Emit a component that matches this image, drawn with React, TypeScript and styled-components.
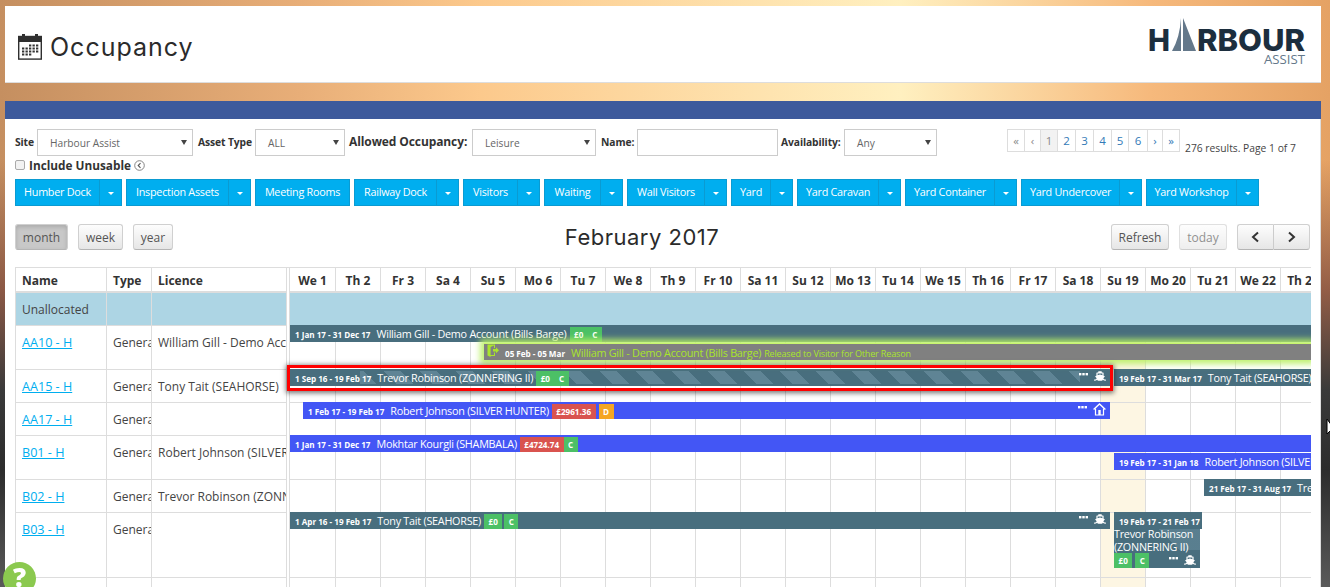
import React from "react";
import styled, { createGlobalStyle, css } from "styled-components";
import { FaShip } from "react-icons/fa";

const GlobalStyle = createGlobalStyle`
	html, body {
		margin: 0;
		padding: 0;
		height: 587px;
		overflow: hidden;
	}
	body {
		font-family: "Open Sans", "Noto Sans", sans-serif;
		color: #333;
		background:
			linear-gradient(to bottom, rgba(90, 50, 40, 0) 160px, rgba(120, 70, 60, 0.75) 290px, #3a3a3a 390px, #2c2c2c 470px, #5a5a5a 587px),
			linear-gradient(to right, #c58f60 0, #e8ae78 300px, #fcc98c 480px, #fff0c0 900px, #f6b97c 1150px, #e5a264 1330px);
	}
`;

const Page = styled.div`
	width: 1316px;
	padding: 6px 0 0 5px;
`;

const Header = styled.header`
	height: 77px;
	background: #fff;
	border-bottom: 1px solid #ddd;
	box-sizing: border-box;
	display: flex;
	align-items: center;
	justify-content: space-between;
	padding: 0 15px 0 13px;
`;

const TitleGroup = styled.div`
	display: flex;
	align-items: center;
	gap: 8px;
	margin-top: 6px;
`;

const PageTitle = styled.h1`
	margin: 0;
	font-family: Inter, "Open Sans", sans-serif;
	font-weight: 400;
	font-size: 25px;
	letter-spacing: 1px;
	color: #2b2b2b;
`;

const BlueBand = styled.div`
	height: 18px;
	margin-top: 18px;
	background: #3d5a9c;
`;

const Panel = styled.main`
	background: #fff;
	padding: 10px 10px 0;
	height: 468px;
	box-sizing: border-box;
	overflow: hidden;
	border-right: 1px solid #ddd;
`;

const FilterRow = styled.div`
	display: flex;
	align-items: flex-start;
	height: 27px;
`;

const FilterLabel = styled.label<{ $big?: boolean; $gap: number; $w: number }>`
	flex: 0 0 ${(p) => p.$w}px;
	font-weight: 700;
	font-size: ${(p) => (p.$big ? "12px" : "10.3px")};
	letter-spacing: -0.1px;
	line-height: 26px;
	margin-left: ${(p) => p.$gap}px;
	white-space: nowrap;
	color: #333;
`;

const SelectBox = styled.div<{ $w: number }>`
	position: relative;
	flex: 0 0 ${(p) => p.$w}px;
	height: 27px;
	box-sizing: border-box;
	border: 1px solid #ccc;
	background: #fff;
	font-size: 10.2px;
	line-height: 26px;
	padding-left: 12px;
	color: #666;
	&::after {
		content: "";
		position: absolute;
		right: 5px;
		top: 10px;
		border-left: 3px solid transparent;
		border-right: 3px solid transparent;
		border-top: 5px solid #444;
	}
`;

const NameInput = styled.input`
	flex: 0 0 141px;
	width: 141px;
	min-width: 0;
	height: 27px;
	box-sizing: border-box;
	border: 1px solid #ccc;
	padding: 0 8px;
	outline: none;
`;

const Pager = styled.ul`
	display: flex;
	list-style: none;
	margin: 0 0 0 70px;
	padding: 0;
	height: 23px;
	border: 1px solid #ddd;
	box-sizing: border-box;
`;

const PageItem = styled.li<{ $w: number; $active?: boolean; $muted?: boolean }>`
	width: ${(p) => p.$w}px;
	text-align: center;
	font-size: 11.5px;
	line-height: 21px;
	border-right: 1px solid #ddd;
	box-sizing: border-box;
	color: ${(p) => (p.$active || p.$muted ? "#8a8a8a" : "#337ab7")};
	background: ${(p) => (p.$active ? "#f2f2f2" : "#fff")};
	&:last-child {
		border-right: 0;
	}
`;

const Results = styled.span`
	font-size: 10.3px;
	margin: 12px 0 0 5px;
	white-space: nowrap;
	color: #444;
`;

const UnusableRow = styled.div`
	display: flex;
	align-items: center;
	height: 14px;
	margin-top: 2px;
`;

const Check = styled.span`
	width: 10px;
	height: 10px;
	box-sizing: border-box;
	border: 1px solid #aaa;
	border-radius: 2px;
	background: #f2f2f2;
	margin-right: 4px;
`;

const UnusableLabel = styled.span`
	font-weight: 700;
	font-size: 11.8px;
	margin-right: 3px;
`;

const GroupRow = styled.div`
	display: flex;
	gap: 4px;
	margin-top: 7px;
`;

const SplitButton = styled.div<{ $w: number }>`
	display: flex;
	width: ${(p) => p.$w}px;
	height: 27px;
	background: #00aeef;
	border: 1px solid #0a9bd2;
	box-sizing: border-box;
	color: #fff;
	font-size: 10.8px;
	letter-spacing: -0.25px;
	line-height: 24px;
	white-space: nowrap;
`;

const SplitMain = styled.span`
	flex: 1;
	text-align: center;
`;

const SplitCaret = styled.span`
	flex: 0 0 21px;
	border-left: 1px solid #0a9bd2;
	display: flex;
	align-items: center;
	justify-content: center;
	&::after {
		content: "";
		border-left: 3px solid transparent;
		border-right: 3px solid transparent;
		border-top: 3px solid #fff;
		margin-top: 2px;
	}
`;

const Toolbar = styled.div`
	display: flex;
	justify-content: space-between;
	align-items: center;
	margin-top: 18px;
	height: 26px;
`;

const ToolGroup = styled.div`
	display: flex;
	gap: 10px;
`;

const Segmented = styled.div`
	display: flex;
`;

const CalendarButton = styled.button<{ $w: number; $active?: boolean; $disabled?: boolean; $seg?: "left" | "right" }>`
	width: ${(p) => p.$w}px;
	height: 26px;
	padding: 0;
	margin: 0;
	box-sizing: border-box;
	font-family: inherit;
	font-size: 12px;
	color: #555;
	background: linear-gradient(to bottom, #fdfdfd, #e6e6e6);
	border: 1px solid #d0d0d0;
	border-bottom-color: #b5b5b5;
	border-radius: 3px;
	display: flex;
	align-items: center;
	justify-content: center;
	${(p) =>
		p.$active &&
		css`
			background: #c8c8c8;
			box-shadow: inset 0 2px 4px rgba(0, 0, 0, 0.15);
		`}
	${(p) =>
		p.$disabled &&
		css`
			opacity: 0.65;
		`}
	${(p) =>
		p.$seg === "left" &&
		css`
			border-radius: 3px 0 0 3px;
			border-right: 1px solid #ccc;
		`}
	${(p) =>
		p.$seg === "right" &&
		css`
			border-radius: 0 3px 3px 0;
			border-left: 0;
		`}
`;

const MonthTitle = styled.h2`
	margin: 0;
	font-family: Inter, "Open Sans", sans-serif;
	font-weight: 400;
	font-size: 22px;
	letter-spacing: 0.5px;
	color: #2b2b2b;
`;

const TableArea = styled.section`
	display: flex;
	margin-top: 17px;
	width: 1296px;
	overflow: hidden;
	border-top: 1px solid #ddd;
`;

const LeftColumn = styled.div`
	flex: 0 0 272px;
	border-left: 1px solid #ddd;
	border-right: 1px solid #ddd;
	box-sizing: border-box;
`;

const RightColumn = styled.div`
	flex: 0 0 1022px;
	margin-left: 2px;
	border-left: 1px solid #ddd;
	box-sizing: border-box;
`;

const HeadRow = styled.div`
	display: flex;
	height: 25px;
	border-bottom: 2px solid #ddd;
	box-sizing: border-box;
`;

const HeadCell = styled.div<{ $w: number }>`
	flex: 0 0 ${(p) => p.$w}px;
	box-sizing: border-box;
	padding-left: 6px;
	font-weight: 700;
	font-size: 12px;
	line-height: 25px;
	border-right: 1px solid #ddd;
	&:last-child {
		border-right: 0;
	}
`;

const DayHead = styled.div<{ $first?: boolean }>`
	flex: 0 0 ${(p) => (p.$first ? 46 : 45)}px;
	box-sizing: border-box;
	text-align: center;
	font-weight: 700;
	font-size: 12px;
	line-height: 25px;
	border-right: 1px solid #ddd;
	white-space: nowrap;
	overflow: hidden;
`;

const BodyRow = styled.div<{ $h: number; $blue?: boolean }>`
	display: flex;
	position: relative;
	height: ${(p) => p.$h}px;
	border-bottom: 1px solid #ddd;
	box-sizing: border-box;
	background: ${(p) => (p.$blue ? "#add5e4" : "#fff")};
`;

const Cell = styled.div<{ $w: number }>`
	flex: 0 0 ${(p) => p.$w}px;
	box-sizing: border-box;
	padding: 8px 0 0 6px;
	font-size: 12px;
	line-height: 18px;
	color: #444;
	border-right: 1px solid #ddd;
	white-space: nowrap;
	overflow: hidden;
	&:last-child {
		border-right: 0;
	}
`;

const RowLink = styled.a`
	color: #00aeef;
	text-decoration: underline;
	font-size: 12.6px;
`;

const DayCell = styled.div<{ $first?: boolean; $today?: boolean; $blue?: boolean }>`
	flex: 0 0 ${(p) => (p.$first ? 46 : 45)}px;
	box-sizing: border-box;
	border-right: ${(p) => (p.$blue ? "0" : "1px solid #ddd")};
	background: ${(p) => (p.$today && !p.$blue ? "#fdf6e3" : "transparent")};
`;

interface BarPlacement {
	$left: number;
	$top: number;
	$width: number;
}

const Bar = styled.div<BarPlacement & { $bg: string; $tall?: boolean }>`
	position: absolute;
	z-index: 2;
	left: ${(p) => p.$left}px;
	top: ${(p) => p.$top}px;
	width: ${(p) => p.$width}px;
	height: ${(p) => (p.$tall ? 56 : 17)}px;
	background: ${(p) => p.$bg};
	color: #fff;
	display: flex;
	align-items: flex-start;
	padding-left: 5px;
	box-sizing: border-box;
	white-space: nowrap;
	overflow: hidden;
`;

const Dates = styled.span`
	font-size: 8.1px;
	font-weight: 700;
	line-height: 19px;
	margin-right: 6px;
	position: relative;
`;

const Holder = styled.span<{ $lime?: boolean }>`
	font-size: 10.8px;
	letter-spacing: -0.25px;
	line-height: 17px;
	color: ${(p) => (p.$lime ? "#a9e52b" : "#fff")};
	margin-right: 3px;
	position: relative;
`;

const Reason = styled.span`
	font-size: 9px;
	letter-spacing: -0.15px;
	line-height: 19px;
	color: #a9e52b;
	position: relative;
`;

const Badge = styled.span<{ $bg: string; $gap?: number }>`
	align-self: flex-end;
	height: 15px;
	line-height: 15px;
	padding: 0 4.5px;
	font-size: 8.1px;
	font-weight: 700;
	background: ${(p) => p.$bg};
	margin-left: ${(p) => p.$gap ?? 0}px;
	color: #fff;
	position: relative;
`;

const BarEnd = styled.span`
	margin-left: auto;
	display: flex;
	align-items: center;
	gap: 6px;
	height: 14px;
	padding-right: 4px;
	position: relative;
`;

const Stripes = styled.span`
	position: absolute;
	left: 70px;
	right: 30px;
	top: 2px;
	bottom: 2px;
	background: repeating-linear-gradient(45deg, #5f8495 0, #5f8495 12px, transparent 12px, transparent 25.5px);
`;

const ReleasedBar = styled(Bar)`
	z-index: 3;
	border-top: 1px solid #c9f56f;
	box-shadow: 0 0 6px 4px rgba(185, 240, 100, 0.9);
	padding-left: 3px;
	overflow: visible;
`;

const DoorWrap = styled.span`
	width: 12px;
	height: 14px;
	margin-right: 6px;
	display: flex;
`;

const RedFrame = styled.div`
	position: absolute;
	z-index: 4;
	left: -3px;
	top: -5px;
	width: 826px;
	height: 26px;
	border: 3px solid #f00;
	box-sizing: border-box;
	box-shadow: 0 1px 5px 1px rgba(0, 0, 0, 0.55);
	pointer-events: none;
`;

const TallHeader = styled.div`
	position: absolute;
	z-index: 3;
	left: 824px;
	top: -1px;
	width: 88px;
	height: 17px;
	background: #486e7e;
	color: #fff;
	padding-left: 5px;
	box-sizing: border-box;
	white-space: nowrap;
	display: flex;
`;

const TallName = styled.div`
	position: absolute;
	left: 0;
	top: 15px;
	width: 86px;
	white-space: normal;
	font-size: 10.8px;
	letter-spacing: -0.25px;
	line-height: 13px;
	color: #fff;
`;

const TallStripe = styled.span`
	position: absolute;
	left: 15px;
	top: 17px;
	right: 0;
	height: 21px;
	background: linear-gradient(45deg, transparent 55%, #5f8495 55%, #5f8495 100%);
	opacity: 0.75;
`;

const TallFooter = styled.div`
	position: absolute;
	left: 0;
	right: 0;
	bottom: 0;
	height: 15px;
	display: flex;
`;

const Logo = styled.svg`
	display: block;
	margin-top: -4px;
`;

const HelpBubble = styled.div`
	position: fixed;
	left: 3px;
	top: 562px;
	width: 33px;
	height: 33px;
	border-radius: 50%;
	background: #8bc94f;
	color: #fff;
	font-family: "Open Sans", sans-serif;
	font-weight: 800;
	font-size: 26px;
	line-height: 30px;
	text-align: center;
	z-index: 10;
`;

const MouseCursor = styled.svg`
	position: fixed;
	left: 1326px;
	top: 418px;
	z-index: 10;
`;

function CalendarIcon() {
	const dots: React.ReactNode[] = [];
	for (let r = 0; r < 4; r++) {
		for (let c = 0; c < 5; c++) {
			if ((r === 0 && c < 2) || (r === 3 && c > 2)) continue;
			dots.push(<rect key={`${r}-${c}`} x={4 + c * 3.5} y={10.5 + r * 3} width="2.3" height="2" fill="#333" />);
		}
	}
	return (
		<svg width="24" height="26" viewBox="0 0 24 26">
			<rect x="0.7" y="2.5" width="22.6" height="22.6" fill="#fff" stroke="#2f2f2f" strokeWidth="1.4" />
			<rect x="0.5" y="2" width="23" height="6" fill="#2f2f2f" />
			<rect x="4" y="0" width="3" height="4" fill="#2f2f2f" />
			<rect x="17" y="0" width="3" height="4" fill="#2f2f2f" />
			{dots}
		</svg>
	);
}

function HarbourLogo() {
	return (
		<Logo width="160" height="50" viewBox="0 0 160 50">
			<text x="2" y="34" fill="#1c2e3e" fontFamily="Inter, 'Open Sans', sans-serif" fontWeight="800" fontSize="30" textLength="22" lengthAdjust="spacingAndGlyphs">H</text>
			<path d="M35 1 Q34 20 26 34 H35 Z" fill="#64788a" />
			<path d="M37 1 L50 34 H37 Z" fill="#64788a" />
			<text x="51" y="34" fill="#1c2e3e" fontFamily="Inter, 'Open Sans', sans-serif" fontWeight="800" fontSize="30" textLength="108" lengthAdjust="spacingAndGlyphs">RBOUR</text>
			<text x="118" y="47" fill="#64788a" fontFamily="'Open Sans', sans-serif" fontSize="13" textLength="41" lengthAdjust="spacingAndGlyphs">ASSIST</text>
		</Logo>
	);
}

function InfoCircle() {
	return (
		<svg width="11" height="11" viewBox="0 0 11 11">
			<circle cx="5.5" cy="5.5" r="4.8" fill="none" stroke="#777" strokeWidth="0.9" />
			<polyline points="6.5,3.2 4.2,5.5 6.5,7.8" fill="none" stroke="#555" strokeWidth="1.1" />
		</svg>
	);
}

function Chevron({ right }: { right?: boolean }) {
	return (
		<svg width="9" height="12" viewBox="0 0 9 12">
			<polyline points={right ? "2,1.5 7,6 2,10.5" : "7,1.5 2,6 7,10.5"} fill="none" stroke="#333" strokeWidth="2" />
		</svg>
	);
}

function Dots() {
	return (
		<svg width="9" height="3" viewBox="0 0 9 3" style={{ marginTop: -4 }}>
			<rect x="0" y="0" width="2.4" height="2.4" fill="#fff" />
			<rect x="3.3" y="0" width="2.4" height="2.4" fill="#fff" />
			<rect x="6.6" y="0" width="2.4" height="2.4" fill="#fff" />
		</svg>
	);
}

function HomeIcon() {
	return (
		<svg width="13" height="13" viewBox="0 0 13 13">
			<polyline points="0.6,6.6 6.5,1 12.4,6.6" fill="none" stroke="#fff" strokeWidth="1.4" />
			<path d="M2.5 5.6V12H10.5V5.6" fill="none" stroke="#fff" strokeWidth="1.2" />
			<rect x="5.3" y="7" width="2.4" height="5" fill="#fff" />
		</svg>
	);
}

function ExitDoor() {
	return (
		<svg width="12" height="13" viewBox="0 0 12 13">
			<path d="M0.5 0.5H8V4H7V1.6L3.6 3V11H7V8.6H8V12H3.6V13L0.5 11.5Z" fill="#a9e52b" />
			<polygon points="6,5 9,5 9,3.2 12,6.2 9,9.2 9,7.4 6,7.4" fill="#a9e52b" />
		</svg>
	);
}

function ShipEnd({ home }: { home?: boolean }) {
	return (
		<BarEnd>
			<Dots />
			{home ? <HomeIcon /> : <FaShip size={12} color="#fff" />}
		</BarEnd>
	);
}

const GROUPS: { label: string; w: number; caret: boolean }[] = [
	{ label: "Humber Dock", w: 107, caret: true },
	{ label: "Inspection Assets", w: 125, caret: true },
	{ label: "Meeting Rooms", w: 95, caret: false },
	{ label: "Railway Dock", w: 105, caret: true },
	{ label: "Visitors", w: 77, caret: true },
	{ label: "Waiting", w: 79, caret: true },
	{ label: "Wall Visitors", w: 100, caret: true },
	{ label: "Yard", w: 62, caret: true },
	{ label: "Yard Caravan", w: 104, caret: true },
	{ label: "Yard Container", w: 112, caret: true },
	{ label: "Yard Undercover", w: 121, caret: true },
	{ label: "Yard Workshop", w: 113, caret: true },
];

const PAGES: { label: string; w: number; active?: boolean; muted?: boolean }[] = [
	{ label: "«", w: 17, muted: true },
	{ label: "‹", w: 16, muted: true },
	{ label: "1", w: 17, active: true },
	{ label: "2", w: 18 },
	{ label: "3", w: 18 },
	{ label: "4", w: 18 },
	{ label: "5", w: 17 },
	{ label: "6", w: 19 },
	{ label: "›", w: 15 },
	{ label: "»", w: 16 },
];

const DAY_NAMES = ["We", "Th", "Fr", "Sa", "Su", "Mo", "Tu"];
const DAYS = Array.from({ length: 23 }, (_, i) => `${DAY_NAMES[i % 7]} ${i + 1}`);

const TEAL = "#486e7e";
const BLUE = "#4356f5";
const GREEN = "#4cc066";
const RED = "#d9534f";
const ORANGE = "#f5a623";

const ROWS = [
	{ name: "Unallocated", type: "", licence: "", h: 33, blue: true },
	{ name: "AA10 - H", type: "General", licence: "William Gill - Demo Account", h: 44 },
	{ name: "AA15 - H", type: "General", licence: "Tony Tait (SEAHORSE)", h: 33 },
	{ name: "AA17 - H", type: "General", licence: "", h: 33 },
	{ name: "B01 - H", type: "General", licence: "Robert Johnson (SILVER HUNTER)", h: 44 },
	{ name: "B02 - H", type: "General", licence: "Trevor Robinson (ZONNERING II)", h: 33 },
	{ name: "B03 - H", type: "General", licence: "", h: 65 },
	{ name: "", type: "", licence: "", h: 40 },
];

// bars keyed by row index, left is measured from the start of the timeline
function rowEvents(index: number) {
	switch (index) {
		case 1:
			return (
				<>
					<Bar $left={0} $top={-1} $width={1021} $bg={TEAL}>
						<Dates>1 Jan 17 - 31 Dec 17</Dates>
						<Holder>William Gill - Demo Account (Bills Barge)</Holder>
						<Badge $bg={GREEN}>£0</Badge>
						<Badge $bg={GREEN}>C</Badge>
					</Bar>
					<ReleasedBar $left={194} $top={17} $width={827} $bg="#808080">
						<DoorWrap>
							<ExitDoor />
						</DoorWrap>
						<Dates>05 Feb - 05 Mar</Dates>
						<Holder $lime>William Gill - Demo Account (Bills Barge)</Holder>
						<Reason>Released to Visitor for Other Reason</Reason>
					</ReleasedBar>
				</>
			);
		case 2:
			return (
				<>
					<Bar $left={0} $top={-1} $width={820} $bg={TEAL}>
						<Stripes />
						<Dates>1 Sep 16 - 19 Feb 17</Dates>
						<Holder>Trevor Robinson (ZONNERING II)</Holder>
						<Badge $bg={GREEN}>£0</Badge>
						<Badge $bg={GREEN}>C</Badge>
						<ShipEnd />
					</Bar>
					<RedFrame />
					<Bar $left={824} $top={-1} $width={197} $bg={TEAL}>
						<Dates>19 Feb 17 - 31 Mar 17</Dates>
						<Holder>Tony Tait (SEAHORSE)</Holder>
					</Bar>
				</>
			);
		case 3:
			return (
				<Bar $left={13} $top={-1} $width={807} $bg={BLUE}>
					<Dates>1 Feb 17 - 19 Feb 17</Dates>
					<Holder>Robert Johnson (SILVER HUNTER)</Holder>
					<Badge $bg={RED}>£2961.36</Badge>
					<Badge $bg={ORANGE} $gap={3}>D</Badge>
					<ShipEnd home />
				</Bar>
			);
		case 4:
			return (
				<>
					<Bar $left={0} $top={-1} $width={1021} $bg={BLUE}>
						<Dates>1 Jan 17 - 31 Dec 17</Dates>
						<Holder>Mokhtar Kourgli (SHAMBALA)</Holder>
						<Badge $bg={RED}>£4724.74</Badge>
						<Badge $bg={GREEN}>C</Badge>
					</Bar>
					<Bar $left={824} $top={17} $width={197} $bg={BLUE}>
						<Dates>19 Feb 17 - 31 Jan 18</Dates>
						<Holder>Robert Johnson (SILVER HUNTER)</Holder>
					</Bar>
				</>
			);
		case 5:
			return (
				<Bar $left={914} $top={-1} $width={107} $bg={TEAL}>
					<Dates>21 Feb 17 - 31 Aug 17</Dates>
					<Holder>Trevor Robinson (ZONNERING II)</Holder>
				</Bar>
			);
		case 6:
			return (
				<>
					<Bar $left={0} $top={-1} $width={820} $bg={TEAL}>
						<Dates>1 Apr 16 - 19 Feb 17</Dates>
						<Holder>Tony Tait (SEAHORSE)</Holder>
						<Badge $bg={GREEN}>£0</Badge>
						<Badge $bg={GREEN} $gap={2}>C</Badge>
						<ShipEnd />
					</Bar>
					<Bar $left={824} $top={-1} $width={86} $bg={TEAL} $tall>
						<TallStripe />
						<TallName>Trevor Robinson (ZONNERING II)</TallName>
						<TallFooter>
							<Badge $bg={GREEN}>£0</Badge>
							<Badge $bg={GREEN} $gap={3}>C</Badge>
							<ShipEnd />
						</TallFooter>
					</Bar>
					<TallHeader>
						<Dates>19 Feb 17 - 21 Feb 17</Dates>
					</TallHeader>
				</>
			);
		default:
			return null;
	}
}

export default function App() {
	return (
		<>
			<GlobalStyle />
			<Page>
				<Header>
					<TitleGroup>
						<CalendarIcon />
						<PageTitle>Occupancy</PageTitle>
					</TitleGroup>
					<HarbourLogo />
				</Header>
				<BlueBand />
				<Panel>
					<FilterRow>
						<FilterLabel $gap={0} $w={22}>Site</FilterLabel>
						<SelectBox $w={156}>Harbour Assist</SelectBox>
						<FilterLabel $gap={5} $w={57}>Asset Type</FilterLabel>
						<SelectBox $w={90}>ALL</SelectBox>
						<FilterLabel $big $gap={4} $w={123}>Allowed Occupancy:</FilterLabel>
						<SelectBox $w={124}>Leisure</SelectBox>
						<FilterLabel $gap={5} $w={36}>Name:</FilterLabel>
						<NameInput />
						<FilterLabel $gap={3} $w={63}>Availability:</FilterLabel>
						<SelectBox $w={93}>Any</SelectBox>
						<Pager>
							{PAGES.map((p) => (
								<PageItem key={p.label} $w={p.w} $active={p.active} $muted={p.muted}>
									{p.label}
								</PageItem>
							))}
						</Pager>
						<Results>276 results. Page 1 of 7</Results>
					</FilterRow>
					<UnusableRow>
						<Check />
						<UnusableLabel>Include Unusable</UnusableLabel>
						<InfoCircle />
					</UnusableRow>
					<GroupRow>
						{GROUPS.map((g) => (
							<SplitButton key={g.label} $w={g.w}>
								<SplitMain>{g.label}</SplitMain>
								{g.caret && <SplitCaret />}
							</SplitButton>
						))}
					</GroupRow>
					<Toolbar>
						<ToolGroup>
							<CalendarButton $w={53} $active>month</CalendarButton>
							<CalendarButton $w={45}>week</CalendarButton>
							<CalendarButton $w={40}>year</CalendarButton>
						</ToolGroup>
						<MonthTitle>February 2017</MonthTitle>
						<ToolGroup>
							<CalendarButton $w={58}>Refresh</CalendarButton>
							<CalendarButton $w={48} $disabled>today</CalendarButton>
							<Segmented>
								<CalendarButton $w={37} $seg="left">
									<Chevron />
								</CalendarButton>
								<CalendarButton $w={36} $seg="right">
									<Chevron right />
								</CalendarButton>
							</Segmented>
						</ToolGroup>
					</Toolbar>
					<TableArea>
						<LeftColumn>
							<HeadRow>
								<HeadCell $w={91}>Name</HeadCell>
								<HeadCell $w={45}>Type</HeadCell>
								<HeadCell $w={134}>Licence</HeadCell>
							</HeadRow>
							{ROWS.map((row, i) => (
								<BodyRow key={i} $h={row.h} $blue={row.blue}>
									<Cell $w={91}>{row.blue ? row.name : <RowLink href="#">{row.name}</RowLink>}</Cell>
									<Cell $w={45}>{row.type}</Cell>
									<Cell $w={134}>{row.licence}</Cell>
								</BodyRow>
							))}
						</LeftColumn>
						<RightColumn>
							<HeadRow>
								{DAYS.map((d, di) => (
									<DayHead key={d} $first={di === 0}>{d}</DayHead>
								))}
							</HeadRow>
							{ROWS.map((row, i) => (
								<BodyRow key={i} $h={row.h} $blue={row.blue}>
									{DAYS.map((d, di) => (
										<DayCell key={d} $first={di === 0} $today={di === 18} $blue={row.blue} />
									))}
									{rowEvents(i)}
								</BodyRow>
							))}
						</RightColumn>
					</TableArea>
				</Panel>
			</Page>
			<HelpBubble>?</HelpBubble>
			<MouseCursor width="6" height="19" viewBox="0 0 6 19">
				<polygon points="1,1 1,16 5,12 9,12" fill="#fff" stroke="#000" strokeWidth="1" />
			</MouseCursor>
		</>
	);
}
